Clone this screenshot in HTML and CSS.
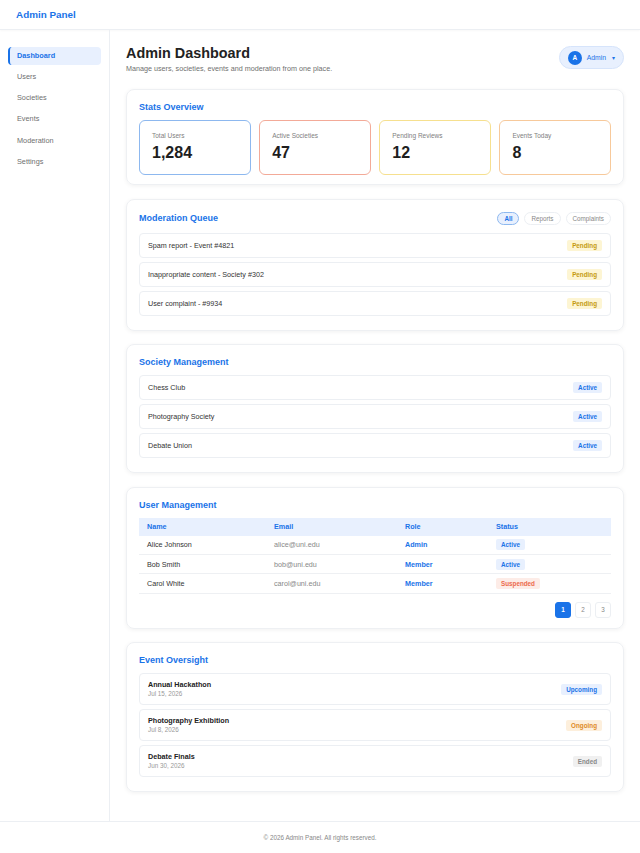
FILE: index.html
```html
<!DOCTYPE html>
<html lang="en">
<head>
    <meta charset="UTF-8">
    <meta name="viewport" content="width=device-width, initial-scale=1.0">
    <title>Admin Panel</title>
    <link rel="stylesheet" href="styles.css">
</head>
<body>
    <header class="topbar">
        <div class="brand">Admin Panel</div>
    </header>

    <div class="layout">
        <aside class="sidebar">
            <a class="nav-item active" href="#">Dashboard</a>
            <a class="nav-item" href="#">Users</a>
            <a class="nav-item" href="#">Societies</a>
            <a class="nav-item" href="#">Events</a>
            <a class="nav-item" href="#">Moderation</a>
            <a class="nav-item" href="#">Settings</a>
        </aside>

        <main class="main">
            <div class="page-head">
                <div>
                    <h1>Admin Dashboard</h1>
                    <p class="subtitle">Manage users, societies, events and moderation from one place.</p>
                </div>
                <div class="user-pill">
                    <span class="avatar">A</span>
                    <span class="user-name">Admin</span>
                    <span class="caret">&#9662;</span>
                </div>
            </div>

            <section class="panel">
                <h2>Stats Overview</h2>
                <div class="stats">
                    <div class="stat blue">
                        <div class="stat-label">Total Users</div>
                        <div class="stat-value">1,284</div>
                    </div>
                    <div class="stat red">
                        <div class="stat-label">Active Societies</div>
                        <div class="stat-value">47</div>
                    </div>
                    <div class="stat yellow">
                        <div class="stat-label">Pending Reviews</div>
                        <div class="stat-value">12</div>
                    </div>
                    <div class="stat orange">
                        <div class="stat-label">Events Today</div>
                        <div class="stat-value">8</div>
                    </div>
                </div>
            </section>

            <section class="panel">
                <div class="panel-head">
                    <h2>Moderation Queue</h2>
                    <div class="filters">
                        <button class="filter active">All</button>
                        <button class="filter">Reports</button>
                        <button class="filter">Complaints</button>
                    </div>
                </div>
                <div class="row">
                    <span>Spam report - Event #4821</span>
                    <span class="badge pending">Pending</span>
                </div>
                <div class="row">
                    <span>Inappropriate content - Society #302</span>
                    <span class="badge pending">Pending</span>
                </div>
                <div class="row">
                    <span>User complaint - #9934</span>
                    <span class="badge pending">Pending</span>
                </div>
            </section>

            <section class="panel">
                <h2>Society Management</h2>
                <div class="row">
                    <span>Chess Club</span>
                    <span class="badge active">Active</span>
                </div>
                <div class="row">
                    <span>Photography Society</span>
                    <span class="badge active">Active</span>
                </div>
                <div class="row">
                    <span>Debate Union</span>
                    <span class="badge active">Active</span>
                </div>
            </section>

            <section class="panel">
                <h2>User Management</h2>
                <table class="users">
                    <thead>
                        <tr>
                            <th class="col-name">Name</th>
                            <th class="col-email">Email</th>
                            <th class="col-role">Role</th>
                            <th>Status</th>
                        </tr>
                    </thead>
                    <tbody>
                        <tr>
                            <td>Alice Johnson</td>
                            <td class="email">alice@uni.edu</td>
                            <td class="role">Admin</td>
                            <td><span class="badge active">Active</span></td>
                        </tr>
                        <tr>
                            <td>Bob Smith</td>
                            <td class="email">bob@uni.edu</td>
                            <td class="role">Member</td>
                            <td><span class="badge active">Active</span></td>
                        </tr>
                        <tr>
                            <td>Carol White</td>
                            <td class="email">carol@uni.edu</td>
                            <td class="role">Member</td>
                            <td><span class="badge suspended">Suspended</span></td>
                        </tr>
                    </tbody>
                </table>
                <div class="pagination">
                    <button class="page active">1</button>
                    <button class="page">2</button>
                    <button class="page">3</button>
                </div>
            </section>

            <section class="panel">
                <h2>Event Oversight</h2>
                <div class="row event">
                    <div>
                        <div class="event-title">Annual Hackathon</div>
                        <div class="event-date">Jul 15, 2026</div>
                    </div>
                    <span class="badge upcoming">Upcoming</span>
                </div>
                <div class="row event">
                    <div>
                        <div class="event-title">Photography Exhibition</div>
                        <div class="event-date">Jul 8, 2026</div>
                    </div>
                    <span class="badge ongoing">Ongoing</span>
                </div>
                <div class="row event">
                    <div>
                        <div class="event-title">Debate Finals</div>
                        <div class="event-date">Jun 30, 2026</div>
                    </div>
                    <span class="badge ended">Ended</span>
                </div>
            </section>
        </main>
    </div>

    <footer class="footer">&copy; 2026 Admin Panel. All rights reserved.</footer>
</body>
</html>
```

FILE: styles.css
```css
* {
    box-sizing: border-box;
    margin: 0;
    padding: 0;
    font-family: 'Liberation Sans', Arial, sans-serif;
}
body {
    background: #fff;
    color: #333;
    font-size: 7.2px;
}
.topbar {
    height: 30px;
    border-bottom: 1px solid #eceff3;
    display: flex;
    align-items: center;
    padding: 0 16px;
    box-shadow: 0 1px 2px rgba(0, 0, 0, 0.03);
}
.brand {
    color: #1a73e8;
    font-weight: bold;
    font-size: 9.9px;
}
.layout {
    display: flex;
}
.sidebar {
    width: 110px;
    flex-shrink: 0;
    border-right: 1px solid #eceff3;
    padding: 16.5px 8px;
    display: flex;
    flex-direction: column;
    gap: 3.3px;
}
.nav-item {
    display: block;
    height: 18px;
    line-height: 18px;
    padding: 0 7px;
    border-left: 2px solid transparent;
    border-radius: 4px;
    color: #6f6f6f;
    text-decoration: none;
    font-size: 7.3px;
}
.nav-item.active {
    background: #e8f0fe;
    border-left-color: #1a73e8;
    color: #1a73e8;
    font-weight: bold;
}
.main {
    flex: 1;
    padding: 16px 16px 15px;
}
.page-head {
    display: flex;
    justify-content: space-between;
    align-items: flex-start;
    margin-bottom: 16px;
}
h1 {
    font-size: 14.4px;
    color: #222;
    line-height: 15px;
}
.subtitle {
    color: #6f6f6f;
    font-size: 7.2px;
    margin-top: 3px;
}
.user-pill {
    display: flex;
    align-items: center;
    height: 23px;
    padding: 0 8px;
    border-radius: 12px;
    background: #e8f0fe;
    border: 1px solid #d6e4fb;
    gap: 5px;
}
.avatar {
    width: 14px;
    height: 14px;
    border-radius: 50%;
    background: #1a73e8;
    color: white;
    font-size: 6.5px;
    font-weight: bold;
    display: flex;
    align-items: center;
    justify-content: center;
}
.user-name {
    color: #1a73e8;
    font-size: 6.8px;
}
.caret {
    color: #1a73e8;
    font-size: 6px;
    margin-left: 1px;
}
.panel {
    border: 1px solid #eef0f3;
    border-radius: 8px;
    padding: 12px 12px 10px;
    margin-bottom: 13.5px;
    box-shadow: 0 1px 4px rgba(0, 0, 0, 0.06);
}
h2 {
    color: #1a73e8;
    font-size: 9px;
    line-height: 11px;
    margin-bottom: 7px;
}
.stats {
    display: grid;
    grid-template-columns: repeat(4, 1fr);
    gap: 8.5px;
    margin-bottom: -1px;
}
.stat {
    height: 55px;
    border: 1px solid #ccc;
    border-radius: 6px;
    padding: 11px 12px;
}
.stat.blue { border-color: #8db8ef; }
.stat.red { border-color: #f3aa98; }
.stat.yellow { border-color: #f6e08f; }
.stat.orange { border-color: #f7c99b; }
.stat-label {
    color: #808080;
    font-size: 6.5px;
    line-height: 8px;
    margin-bottom: 3px;
}
.stat-value {
    color: #1e1e1e;
    font-size: 16px;
    font-weight: bold;
    line-height: 19px;
}
.panel-head {
    display: flex;
    justify-content: space-between;
    align-items: center;
    margin-bottom: 8px;
}
.panel-head h2 {
    margin-bottom: 0;
}
.filters {
    display: flex;
    gap: 5px;
}
.filter {
    height: 13px;
    padding: 0 6px;
    border-radius: 7px;
    border: 1px solid #eceff3;
    background: white;
    color: #888;
    font-size: 6.3px;
}
.filter.active {
    background: #e8f0fe;
    border-color: #8db8ef;
    color: #1a73e8;
    font-weight: bold;
}
.row {
    display: flex;
    justify-content: space-between;
    align-items: center;
    height: 25px;
    padding: 0 8px;
    border: 1px solid #eceff3;
    border-radius: 4px;
    margin-bottom: 4px;
    font-size: 7.2px;
    color: #333;
}
.badge {
    display: inline-block;
    font-size: 6.3px;
    font-weight: bold;
    padding: 2px 5px;
    border-radius: 2px;
    line-height: 7px;
}
.badge.pending { background: #fdf5d3; color: #c49a10; }
.badge.active { background: #e8f0fe; color: #1a73e8; }
.badge.suspended { background: #fdece7; color: #ec6a4c; }
.badge.upcoming { background: #e8f0fe; color: #1a73e8; }
.badge.ongoing { background: #fdefdc; color: #de8a25; }
.badge.ended { background: #f0f0f0; color: #888; }
.users {
    width: 100%;
    border-collapse: collapse;
    font-size: 7.2px;
}
.users th {
    background: #e8f0fe;
    color: #1a73e8;
    text-align: left;
    font-weight: bold;
    height: 18px;
    padding: 0 8px;
}
.users td {
    height: 19.2px;
    padding: 0 8px;
    border-bottom: 1px solid #eef0f3;
    color: #333;
}
.col-name { width: 127px; }
.col-email { width: 131px; }
.col-role { width: 91px; }
.users td.email { color: #888; }
.users td.role { color: #1a73e8; font-weight: bold; }
.pagination {
    display: flex;
    justify-content: flex-end;
    gap: 4px;
    margin-top: 8px;
}
.page {
    width: 16px;
    height: 16px;
    border: 1px solid #eceff3;
    border-radius: 3px;
    background: white;
    color: #888;
    font-size: 6.3px;
}
.page.active {
    background: #1a73e8;
    border-color: #1a73e8;
    color: white;
    font-weight: bold;
}
.row.event {
    height: 32px;
}
.event-title {
    font-weight: bold;
    color: #222;
    font-size: 7.2px;
    line-height: 9px;
}
.event-date {
    color: #999;
    font-size: 6.3px;
    line-height: 8px;
    margin-top: 1px;
}
.footer {
    border-top: 1px solid #eceff3;
    height: 32px;
    display: flex;
    align-items: center;
    justify-content: center;
    color: #888;
    font-size: 6.3px;
}
```
